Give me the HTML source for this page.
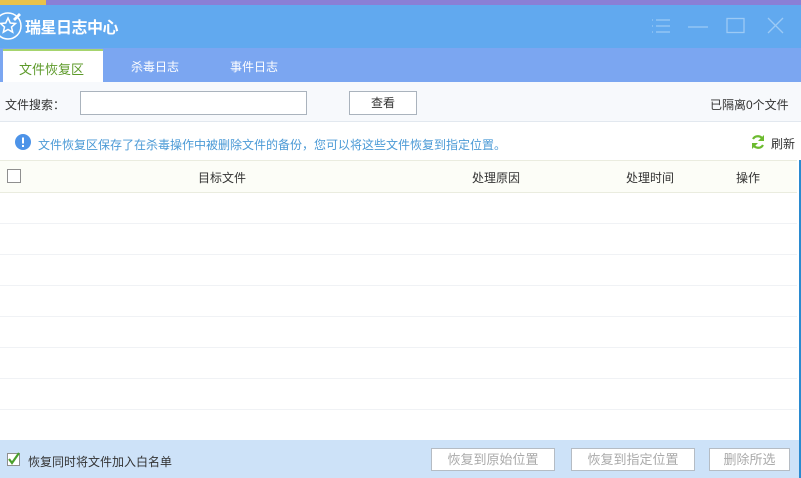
<!DOCTYPE html>
<html><head><meta charset="utf-8"><style>
*{margin:0;padding:0;box-sizing:border-box}
body{width:801px;height:478px;overflow:hidden;background:#fff;font-family:"Liberation Sans","Noto Sans CJK SC",sans-serif;font-size:12px;color:#333;position:relative}
.abs{position:absolute}
</style></head><body>
<div class="abs" style="left:0;top:0;width:801px;height:6px;background:#8a7fd6"></div>
<div class="abs" style="left:0;top:0;width:46px;height:6px;background:#e8c24a"></div>
<div class="abs" style="left:0;top:5px;width:801px;height:43px;background:#61a9ef"></div>
<svg class="abs" style="left:0;top:9px" width="24" height="32" viewBox="0 0 24 32"><circle cx="8" cy="17" r="13" fill="none" stroke="#fff" stroke-width="1.5"/><path d="M8 9l2.3 5 5.2.5-4 3.5 1.2 5.2L8 20.5 3.3 23.2l1.2-5.2-4-3.5 5.2-.5z" fill="none" stroke="#fff" stroke-width="1.5"/><path d="M13 10l6-6 2 2-6 6z" fill="#fff"/></svg>
<div class="abs" style="left:25px;top:14px;color:#fff;font-size:16px;font-weight:bold;letter-spacing:-0.5px">瑞星日志中心</div>
<svg class="abs" style="left:650px;top:17px" width="140" height="20" viewBox="0 0 140 20"><g stroke="#9ccaf5" stroke-width="1.3" fill="none"><path d="M2 3h1M6 3h14M2 9h1M6 9h14M2 15h1M6 15h14"/><path d="M38 10h20"/><rect x="77" y="1.5" width="17" height="14"/><path d="M118 1l15 15M133 1l-15 15"/></g></svg>
<div class="abs" style="left:0;top:48px;width:801px;height:34px;background:#7ba6f1"></div>
<div class="abs" style="left:3px;top:49px;width:100px;height:33px;background:#fff;border-top:2px solid #a6d46e"></div>
<div class="abs" style="left:19px;top:59px;color:#5d9a2a;font-size:13px">文件恢复区</div>
<div class="abs" style="left:131px;top:58px;color:#fff;font-size:12px">杀毒日志</div>
<div class="abs" style="left:230px;top:58px;color:#fff;font-size:12px">事件日志</div>
<div class="abs" style="left:0;top:82px;width:801px;height:40px;background:#f7f9fc;border-bottom:1px solid #e2e8ef"></div>
<div class="abs" style="left:5px;top:96px">文件搜索：</div>
<div class="abs" style="left:80px;top:91px;width:227px;height:24px;border:1px solid #aab3bd;background:#fff"></div>
<div class="abs" style="left:349px;top:91px;width:68px;height:24px;border:1px solid #aab3bd;background:#fff;text-align:center;line-height:22px">查看</div>
<div class="abs" style="left:710px;top:96px">已隔离0个文件</div>
<svg class="abs" style="left:15px;top:134px" width="16" height="16"><circle cx="8" cy="8" r="8" fill="#4d93e8"/><rect x="7" y="3.5" width="2" height="6" fill="#fff"/><rect x="7" y="11" width="2" height="2" fill="#fff"/></svg>
<div class="abs" style="left:38px;top:136px;color:#4b9ad6">文件恢复区保存了在杀毒操作中被删除文件的备份，您可以将这些文件恢复到指定位置。</div>
<svg class="abs" style="left:750px;top:134px" width="16" height="16" viewBox="0 0 16 16"><path d="M13 6A5.5 5.5 0 0 0 3 5" stroke="#6cbb2f" stroke-width="2.2" fill="none"/><path d="M3 10a5.5 5.5 0 0 0 10 1" stroke="#6cbb2f" stroke-width="2.2" fill="none"/><path d="M14 1v6h-6z" fill="#6cbb2f"/><path d="M2 15V9h6z" fill="#6cbb2f"/></svg>
<div class="abs" style="left:771px;top:135px">刷新</div>
<div class="abs" style="left:0;top:160px;width:797px;height:33px;background:#fcfdf7;border-top:1px solid #eaecdf;border-bottom:1px solid #eaecdf"></div>
<div class="abs" style="left:7px;top:169px;width:14px;height:14px;border:1px solid #8f8f8f;background:#fff"></div>
<div class="abs" style="left:198px;top:169px">目标文件</div>
<div class="abs" style="left:472px;top:169px">处理原因</div>
<div class="abs" style="left:626px;top:169px">处理时间</div>
<div class="abs" style="left:736px;top:169px">操作</div>
<div class="abs" style="left:0;top:223px;width:797px;border-top:1px solid #f0f2f5"></div>
<div class="abs" style="left:0;top:254px;width:797px;border-top:1px solid #f0f2f5"></div>
<div class="abs" style="left:0;top:285px;width:797px;border-top:1px solid #f0f2f5"></div>
<div class="abs" style="left:0;top:316px;width:797px;border-top:1px solid #f0f2f5"></div>
<div class="abs" style="left:0;top:347px;width:797px;border-top:1px solid #f0f2f5"></div>
<div class="abs" style="left:0;top:378px;width:797px;border-top:1px solid #f0f2f5"></div>
<div class="abs" style="left:0;top:409px;width:797px;border-top:1px solid #f0f2f5"></div>
<div class="abs" style="left:0;top:440px;width:801px;height:38px;background:#cde2f8"></div>
<div class="abs" style="left:799px;top:160px;width:2px;height:318px;background:#2a8ad0"></div>
<svg class="abs" style="left:6px;top:451px" width="16" height="16"><rect x="1.5" y="2.5" width="12" height="12" fill="#fff" stroke="#8f8f8f"/><path d="M3 8l3 4 7-10" stroke="#4aa02c" stroke-width="2.2" fill="none"/></svg>
<div class="abs" style="left:28px;top:453px">恢复同时将文件加入白名单</div>
<div class="abs" style="left:431px;top:448px;width:124px;height:23px;border:1px solid #b5bcc4;background:#fff;color:#aaa;font-size:13px;text-align:center;line-height:21px">恢复到原始位置</div>
<div class="abs" style="left:571px;top:448px;width:124px;height:23px;border:1px solid #b5bcc4;background:#fff;color:#aaa;font-size:13px;text-align:center;line-height:21px">恢复到指定位置</div>
<div class="abs" style="left:709px;top:448px;width:81px;height:23px;border:1px solid #b5bcc4;background:#fff;color:#aaa;font-size:13px;text-align:center;line-height:21px">删除所选</div>
</body></html>
